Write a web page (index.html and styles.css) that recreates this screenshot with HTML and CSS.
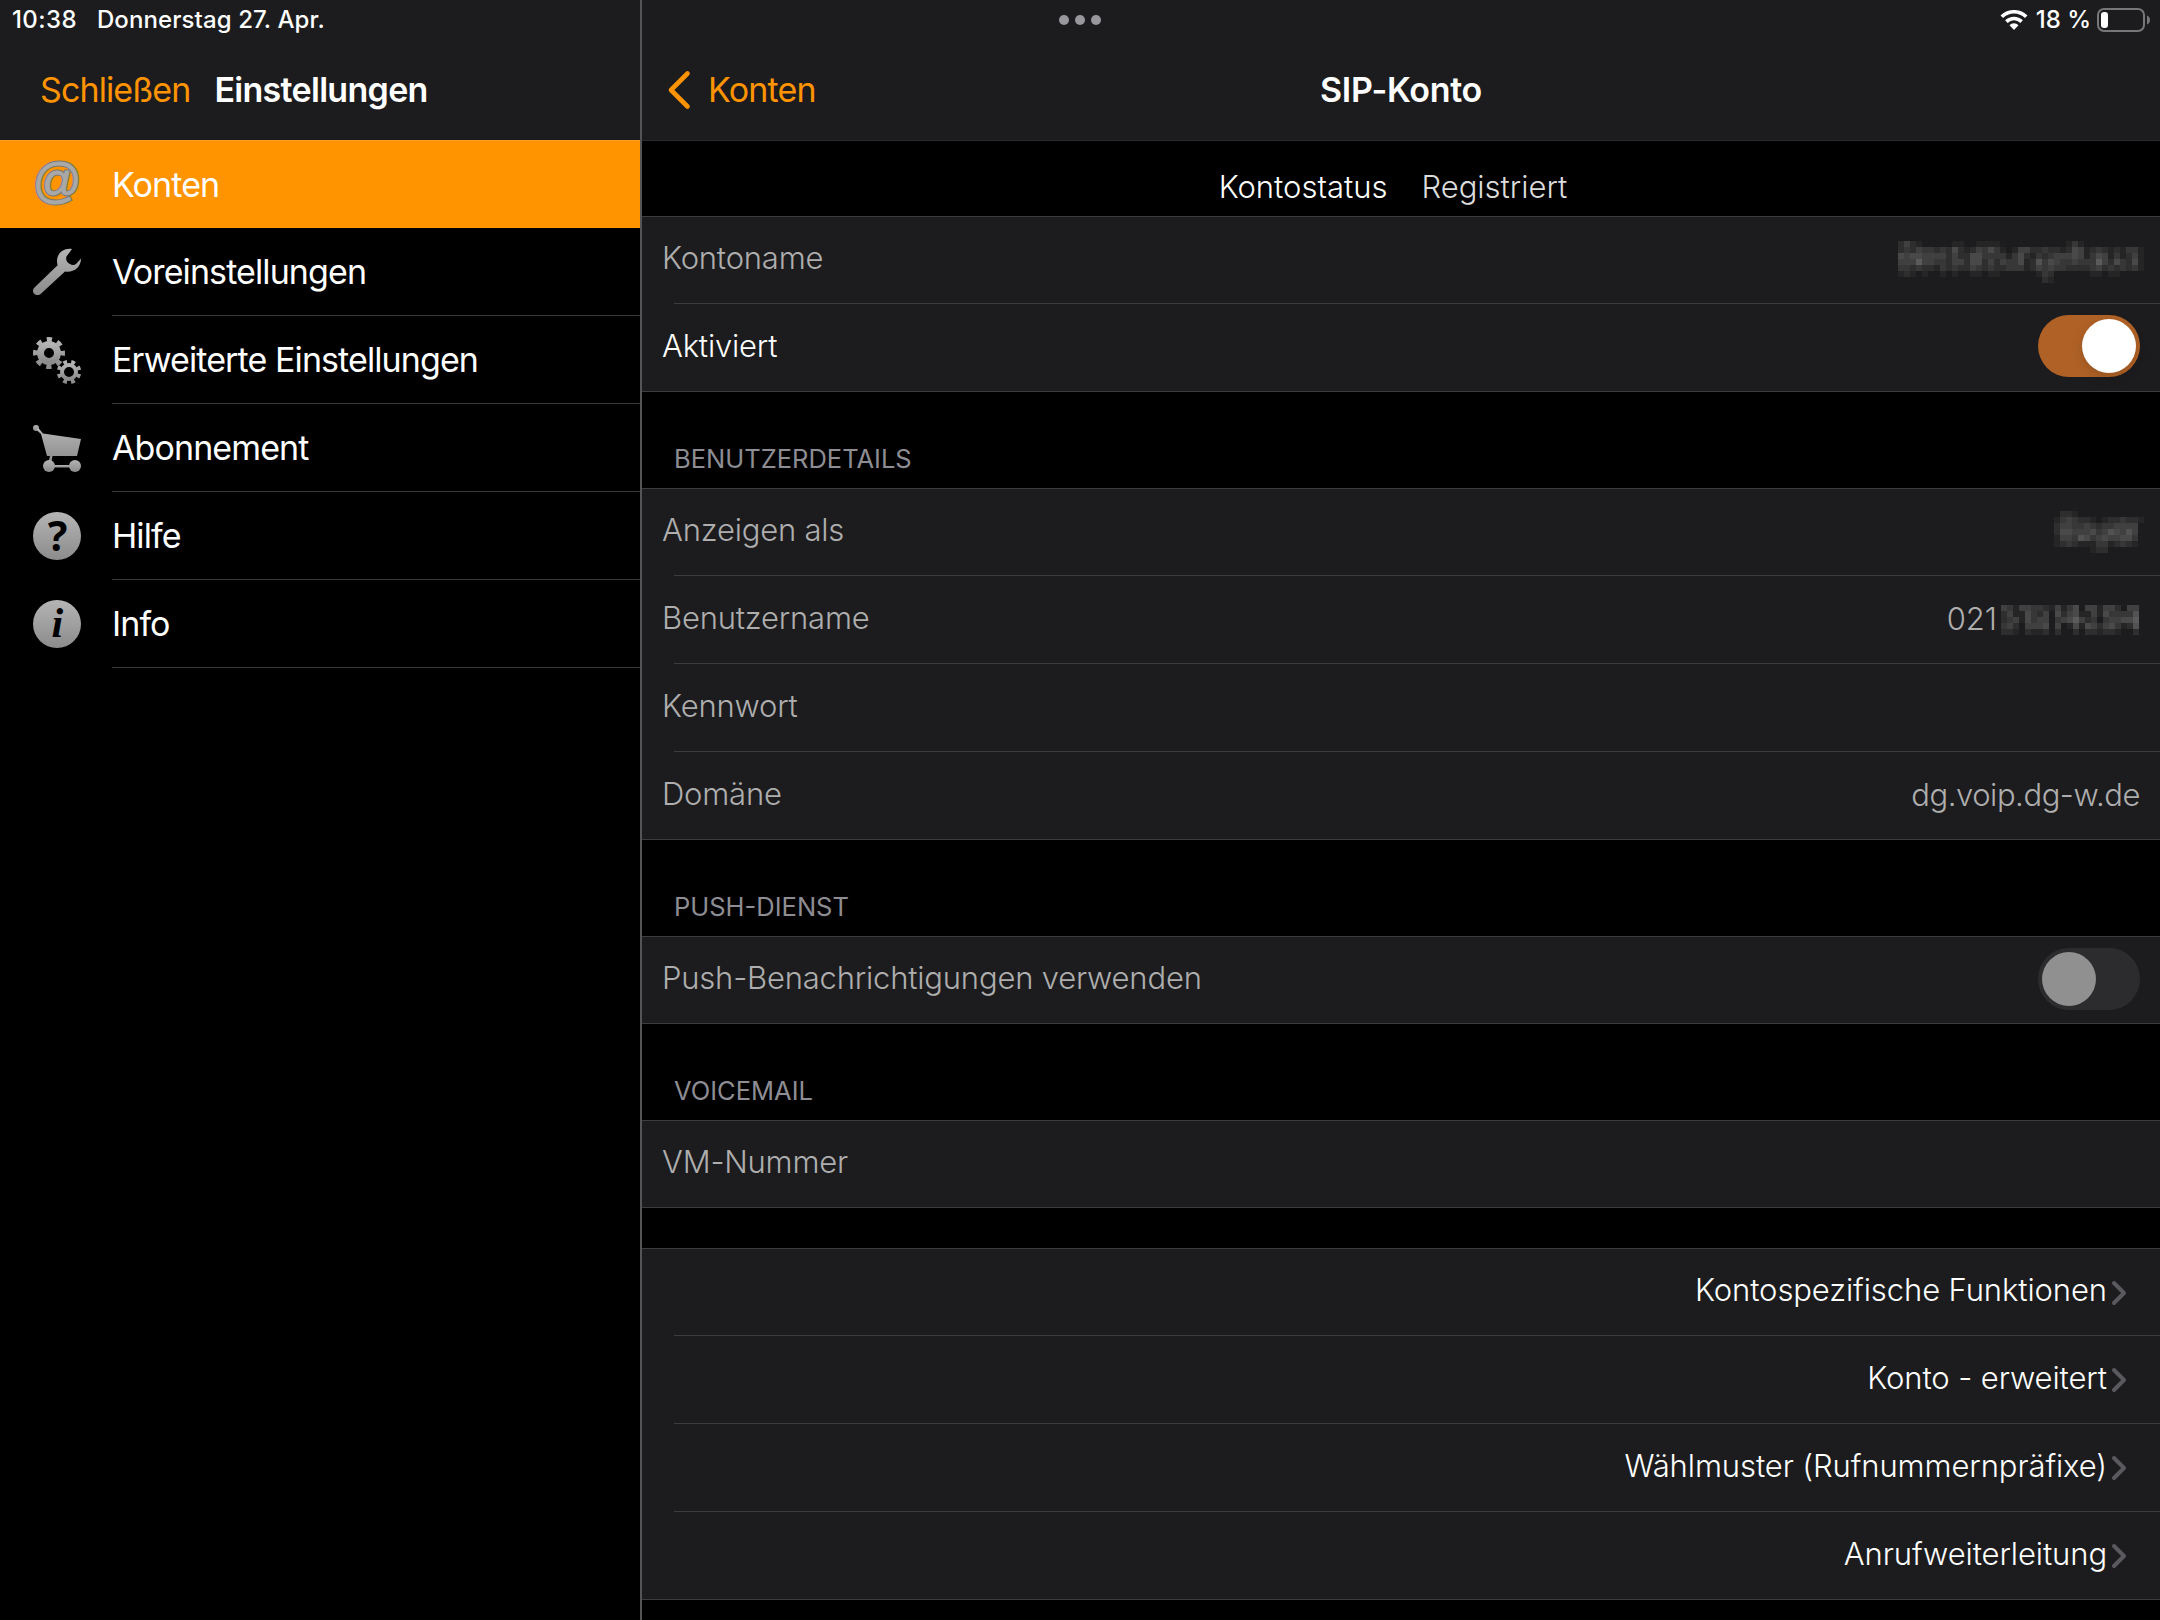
FILE: index.html
```html
<!DOCTYPE html>
<html lang="de">
<head>
  <meta charset="UTF-8">
  <meta name="viewport" content="width=device-width, initial-scale=1.0">
  <title>Einstellungen</title>
  <link rel="stylesheet" href="styles.css">
</head>
<body>
  <div class="container">
    <div class="sidebar">
      <div class="topbar">
        <div class="status">
          <span class="time">10:38</span>
          <span class="date">Donnerstag 27. Apr.</span>
        </div>
        <div class="nav-left">
          <span class="link">Schließen</span>
          <span class="title settings">Einstellungen</span>
        </div>
      </div>
      <div class="menu">
        <div class="menu-item active">
          <svg class="icon" viewBox="0 0 48 48">
            <defs>
              <linearGradient id="grey" x1="0" y1="0" x2="0" y2="1">
                <stop offset="0" stop-color="#b4b4b4"/>
                <stop offset="1" stop-color="#8c8c8c"/>
              </linearGradient>
            </defs>
            <text class="at at-edge" x="24" y="36" text-anchor="middle">@</text>
            <text class="at" x="24" y="36" text-anchor="middle">@</text>
          </svg>
          <span class="menu-label">Konten</span>
        </div>
        <div class="menu-item">
          <svg class="icon" viewBox="0 0 48 48">
            <path fill="url(#grey)" d="M39 1C31-.5 24 5 24 13c0 1.700.3 3 .6 4.300L1.500 39.500c-2 2-2 4.700-.3 6.300 1.800 1.800 5 1.800 7-.3L32 23.500c8.500 1.300 16-4 16-13L43 16c-2 1.500-4 1.300-6.500-.2C33.500 14 32.500 11 33.500 8.500z"/>
          </svg>
          <span class="menu-label">Voreinstellungen</span>
        </div>
        <div class="menu-item">
          <svg class="icon" viewBox="0 0 48 48">
            <g fill="none" stroke="url(#grey)">
              <circle cx="16" cy="17" r="8.500" stroke-width="7"/>
              <circle cx="16" cy="17" r="13.500" stroke-width="5" stroke-dasharray="5.200 5.400" stroke-dashoffset="2.600"/>
              <circle cx="36" cy="36" r="7" stroke-width="4"/>
              <circle cx="36" cy="36" r="10.200" stroke-width="4" stroke-dasharray="3.800 4.200" stroke-dashoffset="-2"/>
            </g>
          </svg>
          <span class="menu-label">Erweiterte Einstellungen</span>
        </div>
        <div class="menu-item">
          <svg class="icon" viewBox="0 0 48 48">
            <g fill="url(#grey)">
              <circle cx="3" cy="4" r="3"/>
              <path d="M3 5.500L5.500 4 10 9.500 48 15l-4 17H19.500L18.500 38 15.500 37.500 17 32H14L8 10z"/>
              <rect x="16" y="41" width="28" height="2.500"/>
              <circle cx="16" cy="42" r="6"/>
              <circle cx="42" cy="42" r="6"/>
            </g>
          </svg>
          <span class="menu-label">Abonnement</span>
        </div>
        <div class="menu-item">
          <svg class="icon" viewBox="0 0 48 48">
            <circle cx="24" cy="24" r="24" fill="url(#grey)"/>
            <text class="help" x="24" y="39" text-anchor="middle">?</text>
          </svg>
          <span class="menu-label">Hilfe</span>
        </div>
        <div class="menu-item">
          <svg class="icon" viewBox="0 0 48 48">
            <circle cx="24" cy="24" r="24" fill="url(#grey)"/>
            <text class="info" x="24" y="37" text-anchor="middle">i</text>
          </svg>
          <span class="menu-label">Info</span>
        </div>
      </div>
    </div>

    <div class="detail">
      <div class="topbar detail-topbar">
        <div class="status detail-status">
          <svg class="dots" width="42" height="10" viewBox="0 0 42 10">
            <circle cx="5" cy="5" r="5"/><circle cx="21" cy="5" r="5"/><circle cx="37" cy="5" r="5"/>
          </svg>
          <div class="status-right">
            <svg class="wifi" width="28" height="20" viewBox="0 0 28 20">
              <path d="M1.800 6.800a17.300 17.300 0 0 1 24.400 0M6.400 11.600a10.800 10.800 0 0 1 15.200 0" fill="none" stroke="#fff" stroke-width="3.600"/>
              <path d="M9.500 15.200a6.400 6.400 0 0 1 9 0L14 20z" fill="#fff"/>
            </svg>
            <span class="percent">18 %</span>
            <svg class="battery" width="54" height="24" viewBox="0 0 54 24">
              <rect x="1" y="1" width="46" height="22" rx="6" fill="none" stroke="#77777a" stroke-width="2"/>
              <rect x="4" y="4" width="7" height="16" rx="3" fill="#fff"/>
              <path d="M50 7.500c4 1.500 4 7.500 0 9z" fill="#77777a"/>
            </svg>
          </div>
        </div>
        <div class="nav-right">
          <div class="back link">
            <svg width="24" height="40" viewBox="0 0 24 40">
              <path d="M20.500 3.500L4 20l16.500 16.500" fill="none" stroke="#ff9300" stroke-width="4.600" stroke-linecap="round" stroke-linejoin="round"/>
            </svg>
            <span class="back-label">Konten</span>
          </div>
          <span class="title sip">SIP-Konto</span>
        </div>
      </div>

      <div class="account-status">
        <span>Kontostatus</span>
        <span class="registered">Registriert</span>
      </div>

      <div class="group">
        <div class="row">
          <span class="label">Kontoname</span>
          <span class="value"><svg id="mask-name" class="mask-name"></svg></span>
        </div>
        <div class="row">
          <span class="label on">Aktiviert</span>
          <span class="toggle toggle-on"><i class="knob"></i></span>
        </div>
      </div>

      <div class="section">BENUTZERDETAILS</div>
      <div class="group">
        <div class="row">
          <span class="label">Anzeigen als</span>
          <span class="value"><svg id="mask-display" class="mask-display"></svg></span>
        </div>
        <div class="row">
          <span class="label">Benutzername</span>
          <span class="value">021<svg id="mask-user" class="mask-user"></svg></span>
        </div>
        <div class="row">
          <span class="label">Kennwort</span>
        </div>
        <div class="row">
          <span class="label">Domäne</span>
          <span class="value domain">dg.voip.dg-w.de</span>
        </div>
      </div>

      <div class="section">PUSH-DIENST</div>
      <div class="group">
        <div class="row">
          <span class="label">Push-Benachrichtigungen verwenden</span>
          <span class="toggle"><i class="knob"></i></span>
        </div>
      </div>

      <div class="section">VOICEMAIL</div>
      <div class="group">
        <div class="row">
          <span class="label">VM-Nummer</span>
        </div>
      </div>

      <div class="group links">
        <div class="row">
          <span>Kontospezifische Funktionen</span>
          <svg class="chevron" viewBox="0 0 16 26"><path d="M3 3l10 10L3 23"/></svg>
        </div>
        <div class="row">
          <span>Konto - erweitert</span>
          <svg class="chevron" viewBox="0 0 16 26"><path d="M3 3l10 10L3 23"/></svg>
        </div>
        <div class="row">
          <span>Wählmuster (Rufnummernpräfixe)</span>
          <svg class="chevron" viewBox="0 0 16 26"><path d="M3 3l10 10L3 23"/></svg>
        </div>
        <div class="row">
          <span>Anrufweiterleitung</span>
          <svg class="chevron" viewBox="0 0 16 26"><path d="M3 3l10 10L3 23"/></svg>
        </div>
      </div>
    </div>
  </div>
  <script src="script.js"></script>
</body>
</html>
```
FILE: styles.css
```css
* {
  box-sizing: border-box;
}
body {
  margin: 0;
  background: #000;
  color: #fff;
  font-family: Inter, "Liberation Sans", sans-serif;
  font-size: 31px;
  font-weight: 300;
}
.container {
  display: flex;
  width: 2160px;
  height: 1620px;
  overflow: hidden;
}
.sidebar {
  width: 642px;
  border-right: 2px solid #545457;
}
.detail {
  flex: 1;
}
.topbar {
  height: 140px;
  background: #1c1c1e;
}
.detail-topbar {
  height: 141px;
  border-bottom: 1px solid #2b2b2d;
}
.status {
  display: flex;
  align-items: center;
  height: 40px;
  font-size: 24px;
  font-weight: 500;
}
.time {
  margin-left: 12px;
  padding-bottom: 2px;
  letter-spacing: .4px;
}
.date {
  margin-left: 20px;
  padding-bottom: 2px;
  letter-spacing: .1px;
}
.detail-status {
  justify-content: space-between;
  padding-left: 417px;
  padding-right: 9px;
}
.dots {
  fill: #98989c;
}
.status-right {
  display: flex;
  align-items: center;
}
.percent {
  margin: 0 6px 0 8px;
  padding-bottom: 2px;
}
.nav-left {
  display: flex;
  align-items: center;
  height: 100px;
  padding: 0 0 2px 40px;
  font-size: 34px;
  letter-spacing: -.9px;
}
.link {
  color: #ff9300;
  font-weight: 400;
}
.title {
  font-weight: 600;
}
.settings {
  margin-left: 24px;
  letter-spacing: -.7px;
}
.nav-right {
  display: grid;
  grid-template-columns: 1fr auto 1fr;
  align-items: center;
  height: 100px;
  font-size: 34px;
}
.back {
  display: flex;
  align-items: center;
  padding-left: 25px;
}
.back-label {
  margin-left: 17px;
  padding-bottom: 2px;
  letter-spacing: -.8px;
}
.sip {
  padding-bottom: 2px;
  letter-spacing: -.3px;
}

/* sidebar menu */
.menu-item {
  display: flex;
  align-items: center;
  height: 88px;
  padding-left: 33px;
  font-size: 34px;
  font-weight: 400;
  letter-spacing: -.9px;
}
.menu-item.active {
  background: #ff9300;
  border-top: 1px solid #ffa024;
}
.icon {
  width: 48px;
  height: 48px;
  overflow: visible;
}
.menu-label {
  flex: 1;
  display: flex;
  align-items: center;
  align-self: stretch;
  margin-left: 31px;
  border-bottom: 1px solid #38383a;
}
.active .menu-label {
  border-bottom: 0;
  padding-bottom: 1px;
}
.at {
  font: 48px "Liberation Sans", sans-serif;
  letter-spacing: 0;
  fill: #a8a8a8;
  stroke: #a8a8a8;
  stroke-width: 1px;
}
.at-edge {
  stroke: #77776f;
  stroke-width: 3px;
}
.help {
  font: bold 41px "Noto Sans", sans-serif;
}
.info {
  font: italic bold 42px "Liberation Serif", serif;
}

/* account details */
.account-status {
  display: flex;
  justify-content: center;
  align-items: center;
  height: 75px;
  padding: 15px 16px 0 0;
}
.registered {
  margin-left: 34px;
  color: #dcdcdc;
}
.row {
  display: flex;
  align-items: center;
  justify-content: space-between;
  height: 88px;
  padding: 0 20px 4px 20px;
  background:
    linear-gradient(#3d3d40, #3d3d40) 32px 100% / 100% 1px no-repeat,
    #1c1c1e;
}
.row:first-child {
  border-top: 1px solid #3d3d40;
}
.row:last-child {
  background-position: 0 100%, 0 0;
}
.label,
.value {
  color: #aeaeae;
}
.label {
  padding-bottom: 2px;
  letter-spacing: -.2px;
}
.label.on {
  color: #fff;
}
.value {
  display: flex;
  align-items: center;
}
.domain {
  letter-spacing: -.45px;
}
.section {
  display: flex;
  align-items: flex-end;
  height: 96px;
  padding: 0 0 14px 32px;
  color: #8d8d93;
  font-size: 25.5px;
  font-weight: 400;
}
.toggle {
  width: 102px;
  height: 62px;
  padding: 4px;
  border-radius: 31px;
  background: #2c2c2e;
}
.toggle-on {
  display: flex;
  justify-content: flex-end;
  background: #b06226;
}
.knob {
  display: block;
  width: 54px;
  height: 54px;
  border-radius: 50%;
  background: #909090;
}
.toggle-on .knob {
  background: #fff;
  box-shadow: 0 4px 12px rgba(0, 0, 0, .15);
}
.links {
  margin-top: 40px;
}
.links .row {
  justify-content: flex-end;
  padding-right: 33px;
}
.links span {
  padding-bottom: 2px;
  letter-spacing: -.1px;
}
.chevron {
  width: 16px;
  height: 26px;
  margin: 4px 0 0 4px;
  fill: none;
  stroke: #5a5a5e;
  stroke-width: 4;
  stroke-linecap: round;
  stroke-linejoin: round;
}

/* pixelated values */
.mask-name {
  width: 246px;
  height: 42px;
  margin: 6px -4px 0 0;
}
.mask-display {
  width: 90px;
  height: 42px;
  margin: 3px -4px 0 0;
}
.mask-user {
  width: 138px;
  height: 30px;
  margin: 3px 1px 0 4px;
}
```
FILE: script.js
```js
// brightness levels of the masked values, one digit per 6px block
const masks = {
  'mask-name': [
    '24210000011001111000000000001310000000000',
    '23243323252124353101442232212541232121331',
    '54554444242255333313521323444541354131241',
    '44474433244255242433512635433433374253251',
    '33232213232243232233312434332222342323231',
    '12101001010011011000000132000000110110000',
    '00000000000000000000000021000000000000000',
  ],
  'mask-display': [
    '022100000000000',
    '134322101223221',
    '244334323344440',
    '255444534654640',
    '144365345445530',
    '123211133123210',
    '000000122000000',
  ],
  'mask-user': [
    '43144332141350441442044',
    '24115324052451141533336',
    '23415344034574230344557',
    '34204445040151542453126',
    '22102112020020221221002',
  ],
};

const drawMask = (id) => {
  const svg = document.getElementById(id);
  let rects = '';
  masks[id].forEach((line, y) => {
    [...line].forEach((level, x) => {
      if (level === '0') return;
      const c = 28 + level * 9;
      rects += `<rect x="${x * 6}" y="${y * 6}" width="6" height="6" fill="rgb(${c},${c},${c})"/>`;
    });
  });
  svg.innerHTML = rects;
};

Object.keys(masks).forEach(drawMask);
```
